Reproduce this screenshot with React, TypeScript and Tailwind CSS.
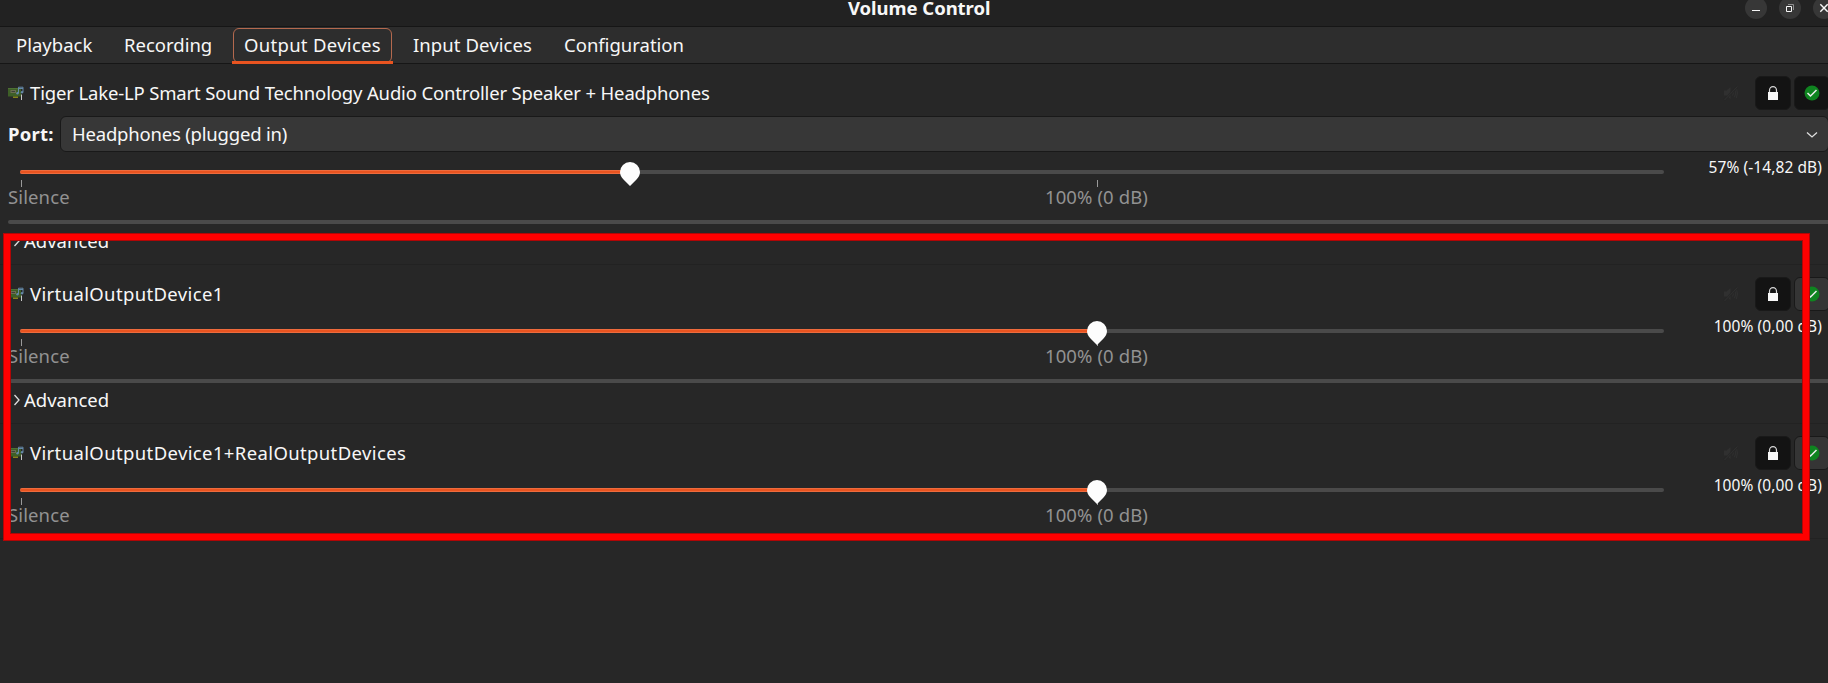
import type { ReactNode } from "react";

type Device = {
  name: ReactNode;
  port?: string;
  value: number;
  level: string;
  isDefault?: boolean;
};

const TRACK_WIDTH = 1644;

const devices: Device[] = [
  {
    name: (
      <span className="tracking-[-0.155px]">
        Tiger Lake-LP Smart Sound Technology Audio Controller Speaker + Headphones
      </span>
    ),
    port: "Headphones (plugged in)",
    value: 610,
    level: "57% (-14,82 dB)",
    isDefault: true,
  },
  { name: <span className="tracking-[0.36px]">VirtualOutputDevice1</span>, value: 1077, level: "100% (0,00 dB)" },
  {
    name: <span className="tracking-[0.37px]">VirtualOutputDevice1+RealOutputDevices</span>,
    value: 1077,
    level: "100% (0,00 dB)",
  },
];

function CardIcon() {
  return (
    <svg width="16" height="16" viewBox="0 0 16 16" className="shrink-0">
      <path d="M0 3h13v8.500H0z" fill="#3e5f27" />
      <path d="M0 3h13v1H0z" fill="#4d7034" />
      <path d="M2.500 5h5.500v3H2.500z" fill="#6c6f52" />
      <path d="M3.500 6h3.500v1H3.500z" fill="#3c4238" />
      <path d="M5 11.500h5V13H5z" fill="#85851a" />
      <path d="M13 9.500h1V15h-1z" fill="#c8c8c8" />
      <path d="M10.500 8V2.200h4.500V7M10.500 3.500H15" fill="none" stroke="#6489a8" strokeWidth="1" />
      <circle cx="9.500" cy="8.200" r="1.200" fill="#6489a8" />
      <circle cx="14" cy="7.300" r="1.200" fill="#6489a8" />
    </svg>
  );
}

function MutedIcon() {
  return (
    <svg width="16" height="16" viewBox="0 0 16 16" fill="none" stroke="#303030">
      <path d="M1 5.500h2.500L7.500 2v12L3.500 10.500H1z" fill="#303030" stroke="none" />
      <path d="M9.500 5.500q1.800 2.500 0 5M11.500 3.800q2.600 4.200 0 8.400M13.300 3q2.200 5 0 10" />
      <path d="M1.500 15L14.500 1.500" stroke="#272727" strokeWidth="2.400" />
      <path d="M1.500 15L14.500 1.500" />
    </svg>
  );
}

function LockIcon() {
  return (
    <svg width="16" height="16" viewBox="0 0 16 16">
      <path d="M4.500 8V5.300a3.500 3.700 0 0 1 7 0V8" fill="none" stroke="#d8d8d8" strokeWidth="1.200" />
      <path d="M3 7h10v8H3z" fill="#f7f7f7" />
    </svg>
  );
}

function CheckIcon() {
  return (
    <svg width="16" height="16" viewBox="0 0 16 16" className="shrink-0">
      <circle cx="8" cy="8" r="7.500" fill="#0f8420" />
      <path d="M3.500 8l3 3 6-6" fill="none" stroke="#ededed" strokeWidth="1.500" />
    </svg>
  );
}

function Tab({ children, active }: { children: ReactNode; active?: boolean }) {
  return (
    <div className={active ? "relative ml-[21px] h-[36px] w-[161px] px-px pt-px" : "h-[36px]"}>
      {active ? (
        <>
          <div className="h-[35px] rounded-[6px] border border-[#b4694e] pl-[10px] leading-[32px]">{children}</div>
          <div className="absolute inset-x-0 -bottom-px h-[3px] bg-[#e95420]" />
        </>
      ) : (
        <div className="leading-[36px]">{children}</div>
      )}
    </div>
  );
}

function Slider({ value, level }: { value: number; level: string }) {
  return (
    <div className="flex h-[68px] items-start justify-between pr-[6px]">
      <div className="w-[1676px] pt-[18px]">
        <div className="relative ml-5 h-1 w-[1644px] rounded-[2px] bg-[#4a4a4a]">
          <div
            className="h-1 rounded-l-[2px] border-y border-[#ee6b3d] bg-[#e95420]"
            style={{ width: Math.min(value, TRACK_WIDTH) }}
          />
          <svg
            width="20"
            height="24"
            viewBox="0 0 20 24"
            className="absolute -top-2 -ml-[10px]"
            style={{ left: value }}
          >
            <path d="M10 0a10 10 0 0 1 10 10c0 3-1.300 5.200-3.500 7.400L10 24l-6.500-6.600C1.300 15.200 0 13 0 10A10 10 0 0 1 10 0z" fill="#fdfdfd" />
          </svg>
        </div>
        <div className="mt-[6px] ml-[21px] flex">
          <div className="h-[7px] w-px bg-[#9a9a9a]" />
          <div className="ml-[1075px] h-[7px] w-px bg-[#9a9a9a]" />
        </div>
        <div className="flex pl-[8px] leading-[20px] text-[#929292]">
          <div className="w-[1037px] tracking-[0.12px]">Silence</div>
          <div className="tracking-[0.1px]">100% (0 dB)</div>
        </div>
      </div>
      <div className="pt-[4px] text-[15.500px] leading-[22px] tracking-[0.08px] whitespace-nowrap text-[#f7f7f7]">{level}</div>
    </div>
  );
}

function DeviceRow({ device }: { device: Device }) {
  return (
    <section className="h-fit shrink-0 border-b border-[#222222]">
      <div className="flex h-[46px] items-start pt-3 pl-2">
        <div className="flex h-[34px] grow items-center gap-[6px]">
          <CardIcon />
          <div className="leading-[34px] whitespace-nowrap">{device.name}</div>
        </div>
        <div className="flex w-[105px] shrink-0 items-center">
          <div className="flex h-[34px] w-[32px] shrink-0 items-center">
            <MutedIcon />
          </div>
          <div className="flex h-[34px] w-[36px] shrink-0 items-center justify-center rounded-[6px] border border-[#191919] bg-[#131313]">
            <LockIcon />
          </div>
          <div
            className={
              device.isDefault
                ? "ml-[3px] flex h-[34px] w-[36px] shrink-0 items-center justify-center rounded-[6px] border border-[#191919] bg-[#131313]"
                : "ml-[3px] flex h-[34px] w-[36px] shrink-0 items-center justify-center rounded-[6px] border border-[#191919] bg-[#353535]"
            }
          >
            <CheckIcon />
          </div>
        </div>
      </div>
      {device.port && (
        <div className="mt-[6px] flex h-[36px] items-center pl-[8px]">
          <div className="w-[52px] font-bold leading-[36px] tracking-[0.25px]">Port:</div>
          <div className="-mr-px flex h-[36px] grow items-center justify-between rounded-[6px] border border-[#191919] bg-[#373737] pr-[10px] pl-[11px]">
            <div className="leading-[34px] tracking-[-0.2px]">{device.port}</div>
            <svg width="12" height="8" viewBox="0 0 12 8" className="mt-[2px]">
              <path d="M1 1.500l5 4.500 5-4.500" fill="none" stroke="#dedede" strokeWidth="1.300" />
            </svg>
          </div>
        </div>
      )}
      <Slider value={device.value} level={device.level} />
      <div className="ml-2 h-1 rounded-l-[2px] bg-[#4a4a4a]" />
      <div className="flex h-[40px] items-start pl-[13px]">
        <svg width="8" height="12" viewBox="0 0 8 12" className="mt-[11px]">
          <path d="M1.500 1l4.500 5-4.500 5" fill="none" stroke="#dedede" strokeWidth="1.300" />
        </svg>
        <div className="pl-[3px] leading-[34px]">Advanced</div>
      </div>
    </section>
  );
}

export default function App() {
  return (
    <div className="relative flex h-[683px] w-full flex-col overflow-hidden bg-[#272727] font-['Noto_Sans',sans-serif] text-[18.500px] text-[#f7f7f7]">
      <header className="flex h-[27px] shrink-0 items-start border-b border-[#161616] bg-[#222222]">
        <div className="-mt-[4px] grow pl-[848px] font-bold leading-[24px] tracking-[-0.05px]">Volume Control</div>
        <div className="-mr-[7px] flex shrink-0 -translate-y-[3px] gap-3">
          <div className="flex size-[22px] items-center justify-center rounded-full bg-[#373737]">
            <svg width="16" height="16" viewBox="0 0 16 16">
              <path d="M4 10.500h8" stroke="#f7f7f7" />
            </svg>
          </div>
          <div className="flex size-[22px] items-center justify-center rounded-full bg-[#373737]">
            <svg width="16" height="16" viewBox="0 0 16 16" fill="none">
              <path d="M6 4.500h5.500V10" stroke="#8f8f8f" />
              <path d="M4.500 6.500h5v5h-5z" stroke="#f7f7f7" />
            </svg>
          </div>
          <div className="flex size-[22px] items-center justify-center rounded-full bg-[#373737]">
            <svg width="16" height="16" viewBox="0 0 16 16" fill="none">
              <path d="M4.300 4.300l7.400 7.400M11.700 4.300l-7.400 7.400" stroke="#f7f7f7" strokeWidth="1.400" />
            </svg>
          </div>
        </div>
      </header>
      <nav className="flex h-[37px] shrink-0 border-b border-[#161616] bg-[#2d2d2d] pl-[16px]">
        <div className="w-[108px]"><Tab>Playback</Tab></div>
        <div className="w-[87px]"><Tab>Recording</Tab></div>
        <div className="w-[202px] whitespace-nowrap tracking-[0.3px]"><Tab active>Output Devices</Tab></div>
        <div className="w-[151px] whitespace-nowrap tracking-[0.08px]"><Tab>Input Devices</Tab></div>
        <Tab>Configuration</Tab>
      </nav>
      <main className="flex h-[475px] shrink-0 flex-col overflow-hidden border-b border-[#222222]">
        {devices.map((device, i) => (
          <DeviceRow key={i} device={device} />
        ))}
      </main>
      <div className="pointer-events-none absolute top-[233px] left-[3px] h-[308px] w-[1807px] border border-[#b00606]">
        <div className="h-full border-[6px] border-[#ff0000]">
          <div className="h-full border border-[#b00606]" />
        </div>
      </div>
    </div>
  );
}
